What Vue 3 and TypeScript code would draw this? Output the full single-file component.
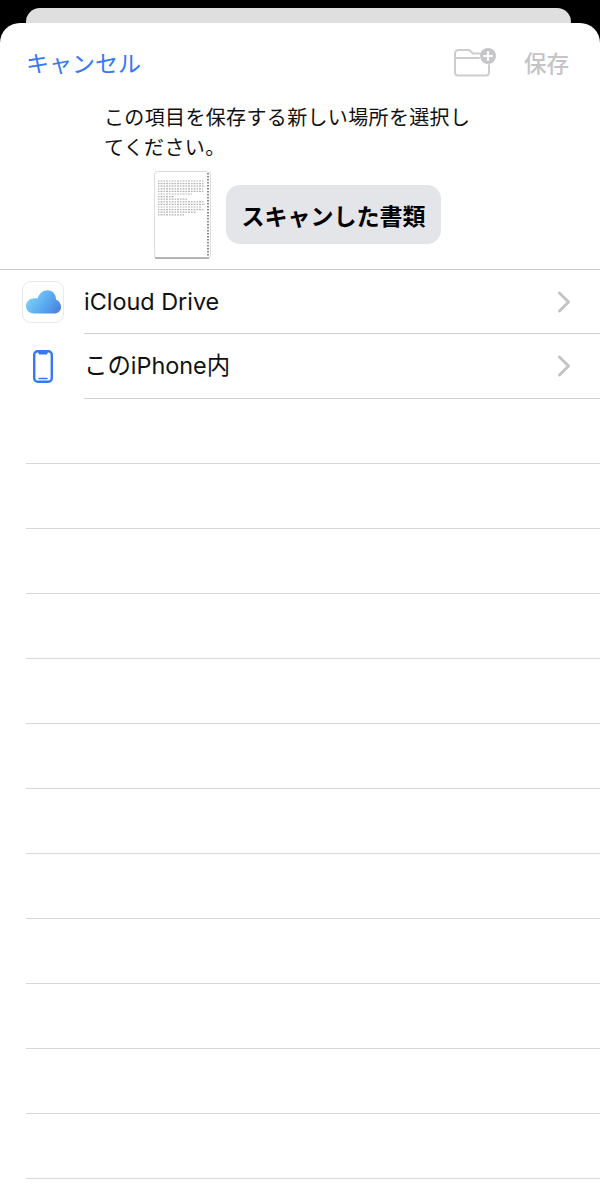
<template>
  <div class="screen">
    <div class="back-sheet"></div>
    <div class="sheet">
      <header class="nav">
        <span class="cancel">キャンセル</span>
        <div class="nav-right">
          <svg class="new-folder" width="44" height="30" viewBox="0 0 44 30">
            <path d="M26 6.500 H19 L15 3 H4.500 A3.500 3.500 0 0 0 1 6.500 V25.500 A3 3 0 0 0 4 28.500 H32 A3 3 0 0 0 35 25.500 V18" fill="none" stroke="#cdcdcf" stroke-width="2" stroke-linecap="round" stroke-linejoin="round" />
            <path d="M1 11 H25" fill="none" stroke="#cdcdcf" stroke-width="2" stroke-linecap="round" />
            <circle cx="34" cy="9" r="8" fill="#c6c6c8" />
            <path d="M34 5 V13 M30 9 H38" stroke="#fff" stroke-width="2.200" stroke-linecap="round" />
          </svg>
          <span class="save">保存</span>
        </div>
      </header>

      <p class="message">この項目を保存する新しい場所を選択してください。</p>

      <div class="preview">
        <svg class="thumb" width="57" height="88" viewBox="0 0 57 88">
          <rect x="0.500" y="0.500" width="56" height="87" rx="3" fill="#fff" stroke="#dcdcdc" />
          <path d="M1 87 H55" stroke="#a0a0a0" stroke-width="1.500" />
          <path
            v-for="line in scanLines"
            :key="line.y"
            :d="`M4 ${line.y} H${line.end}`"
            stroke="#b4b4b4"
            stroke-width="1.200"
            stroke-dasharray="1.500 1 2 1"
          />
          <path d="M54 2 V86" stroke="#888" stroke-width="2" stroke-dasharray="1.500 1.500" />
        </svg>
        <div class="name-pill">スキャンした書類</div>
      </div>

      <ul class="list">
        <li v-for="(row, idx) in rows" :key="row.label" class="row">
          <div class="row-icon">
            <div v-if="idx === 0" class="cloud-tile">
              <svg width="35" height="24" viewBox="0 0 35 24">
                <defs>
                  <linearGradient id="cloudFill" x1="0" y1="0.300" x2="1" y2="0.800">
                    <stop offset="0" stop-color="#86d2f7" />
                    <stop offset="0.550" stop-color="#5aaaf0" />
                    <stop offset="1" stop-color="#4a7fdc" />
                  </linearGradient>
                </defs>
                <path d="M8 23.500 C3.500 23.500 0 20.500 0 16 C0 12 3 9 7 8.500 C8.500 8 10 8 11.500 8.500 C13 3.500 17 0.200 21.500 0.200 C26.500 0.200 30 4 30 9.500 C33 11 35 13.500 35 17 C35 21 32 23.500 28 23.500 Z" fill="url(#cloudFill)" />
              </svg>
            </div>
            <svg v-else width="20" height="33" viewBox="0 0 20 33">
              <rect x="1.200" y="1.200" width="17.600" height="30.600" rx="3.500" fill="none" stroke="#3478f6" stroke-width="2.400" />
              <path d="M5 2 H15 L14 4.500 H6 Z" fill="#3478f6" />
              <path d="M6 28.500 H14" stroke="#3478f6" stroke-width="1.500" stroke-linecap="round" />
            </svg>
          </div>
          <div class="row-body">
            <span class="row-label">{{ row.label }}</span>
            <svg class="chevron" width="14" height="22" viewBox="0 0 14 22">
              <path d="M2.500 2 L11.500 11 L2.500 20" fill="none" stroke="#c4c4c6" stroke-width="3" stroke-linecap="round" stroke-linejoin="round" />
            </svg>
          </div>
        </li>
      </ul>

      <div v-for="n in 12" :key="n" class="empty-row"></div>
    </div>
  </div>
</template>

<script setup lang="ts">
const rows = [{ label: "iCloud Drive" }, { label: "このiPhone内" }];

// rough stand-in for the scanned text on the page thumbnail
const lineEnds = [50, 50, 51, 49, 50, 38, 20, 34, 50, 51, 48, 50, 42, 30];
const scanLines = lineEnds.map((end, i) => ({ y: 10 + i * 2.6, end }));
</script>

<style>
html,
body {
  margin: 0;
  background: #000;
}
</style>

<style scoped>
.screen {
  position: relative;
  width: 600px;
  height: 1188px;
  overflow: hidden;
  background: #000;
  padding-top: 23px;
  box-sizing: border-box;
  font-family: Inter, "Noto Sans CJK JP", sans-serif;
}
.back-sheet {
  position: absolute;
  top: 8px;
  left: 26px;
  width: 545px;
  height: 40px;
  background: #dfdfdf;
  border-radius: 14px 14px 0 0;
}
.sheet {
  position: relative;
  height: 1165px;
  background: #fff;
  border-radius: 20px 20px 0 0;
}
.nav {
  display: flex;
  justify-content: space-between;
  align-items: center;
  height: 78px;
  padding: 0 31px 2px 26px;
}
.cancel {
  font-size: 23px;
  color: #3478f6;
}
.nav-right {
  display: flex;
  align-items: center;
  gap: 26px;
}
.new-folder {
  display: block;
}
.save {
  font-size: 22.500px;
  color: #c4c4c6;
  font-weight: 500;
}
.message {
  margin: 0;
  padding: 0 120px 0 104px;
  height: 62px;
  font-size: 20px;
  line-height: 30px;
  letter-spacing: 0.35px;
  color: #111;
}
.preview {
  display: flex;
  align-items: center;
  gap: 15px;
  padding: 0 0 5px 154px;
  height: 105px;
  box-sizing: border-box;
  border-bottom: 1px solid #c8c8ca;
}
.thumb {
  display: block;
  flex: none;
}
.name-pill {
  width: 215px;
  height: 59px;
  display: flex;
  align-items: center;
  justify-content: center;
  background: #e4e5e9;
  border-radius: 14px;
  font-size: 23px;
  font-weight: 700;
  color: #000;
}
.list {
  list-style: none;
  margin: 0;
  padding: 0;
}
.row {
  display: flex;
  height: 65px;
  box-sizing: border-box;
}
.row:first-child {
  height: 64px;
}
.row-icon {
  width: 84px;
  box-sizing: border-box;
  padding-left: 2px;
  display: flex;
  align-items: center;
  justify-content: center;
}
.cloud-tile {
  width: 42px;
  height: 42px;
  box-sizing: border-box;
  display: flex;
  align-items: center;
  justify-content: center;
  border: 1px solid #e8e8e8;
  border-radius: 9px;
}
.row-body {
  flex: 1;
  display: flex;
  align-items: center;
  justify-content: space-between;
  padding-right: 29px;
  border-bottom: 1px solid #d2d2d4;
}
.row-label {
  font-size: 23.400px;
  line-height: 30px;
  color: #111;
}
.chevron {
  display: block;
}
.empty-row {
  height: 64px;
  margin-left: 26px;
  border-bottom: 1px solid #d8d8da;
}
</style>
